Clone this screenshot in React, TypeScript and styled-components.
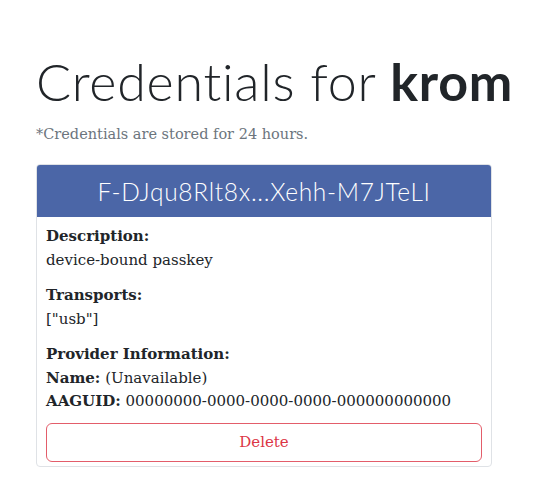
import styled, { createGlobalStyle } from 'styled-components';

// styles
const GlobalStyle = createGlobalStyle`
  html, body {
    margin: 0;
    padding: 0;
    background: #ffffff;
  }
`;

const Page = styled.main`
  padding: 50px 0 0 36px;
  width: 456px;
  font-family: "DejaVu Serif", "Liberation Serif", serif;
  color: #212529;
`;

const Title = styled.h1`
  margin: 0;
  font-family: Lato, "Open Sans", sans-serif;
  font-weight: 300;
  font-size: 52px;
  line-height: 1.2;
  letter-spacing: 0.75px;
  white-space: nowrap;
  color: #212529;

  strong {
    font-weight: 700;
  }
`;

const Note = styled.p`
  margin: 14px 0 22px;
  font-size: 14.5px;
  color: #6c757d;
`;

const Card = styled.section`
  border: 1px solid #dfe2e6;
  border-radius: 4px;
  overflow: hidden;
`;

const CardHeader = styled.header`
  height: 52px;
  display: flex;
  align-items: center;
  justify-content: center;
  background: #4b66a7;
  color: #ffffff;
  font-family: Lato, "Open Sans", sans-serif;
  font-weight: 300;
  font-size: 24.5px;
  letter-spacing: 0.7px;
`;

const CardBody = styled.div`
  padding: 8px 9px 4px;
  font-size: 15px;
  line-height: 23.5px;
`;

const Field = styled.div`
  margin-bottom: 12px;
`;

const Label = styled.div`
  font-weight: 700;
`;

const Line = styled.div`
  b {
    font-weight: 700;
  }
`;

const DeleteButton = styled.button`
  display: block;
  width: 100%;
  height: 39px;
  margin-top: 9px;
  border: 1px solid #e35d6a;
  border-radius: 6px;
  background: #ffffff;
  color: #dc3545;
  font-family: "DejaVu Serif", "Liberation Serif", serif;
  font-size: 15px;
  cursor: pointer;
`;

// component
export default function App() {
  return (
    <>
      <GlobalStyle />
      <Page>
        <Title>
          Credentials for <strong>krom</strong>
        </Title>
        <Note>*Credentials are stored for 24 hours.</Note>
        <Card>
          <CardHeader>F-DJqu8Rlt8x...Xehh-M7JTeLI</CardHeader>
          <CardBody>
            <Field>
              <Label>Description:</Label>
              <Line>device-bound passkey</Line>
            </Field>
            <Field>
              <Label>Transports:</Label>
              <Line>["usb"]</Line>
            </Field>
            <div>
              <Label>Provider Information:</Label>
              <Line>
                <b>Name:</b> (Unavailable)
              </Line>
              <Line>
                <b>AAGUID:</b> 00000000-0000-0000-0000-000000000000
              </Line>
            </div>
            <DeleteButton>Delete</DeleteButton>
          </CardBody>
        </Card>
      </Page>
    </>
  );
}
